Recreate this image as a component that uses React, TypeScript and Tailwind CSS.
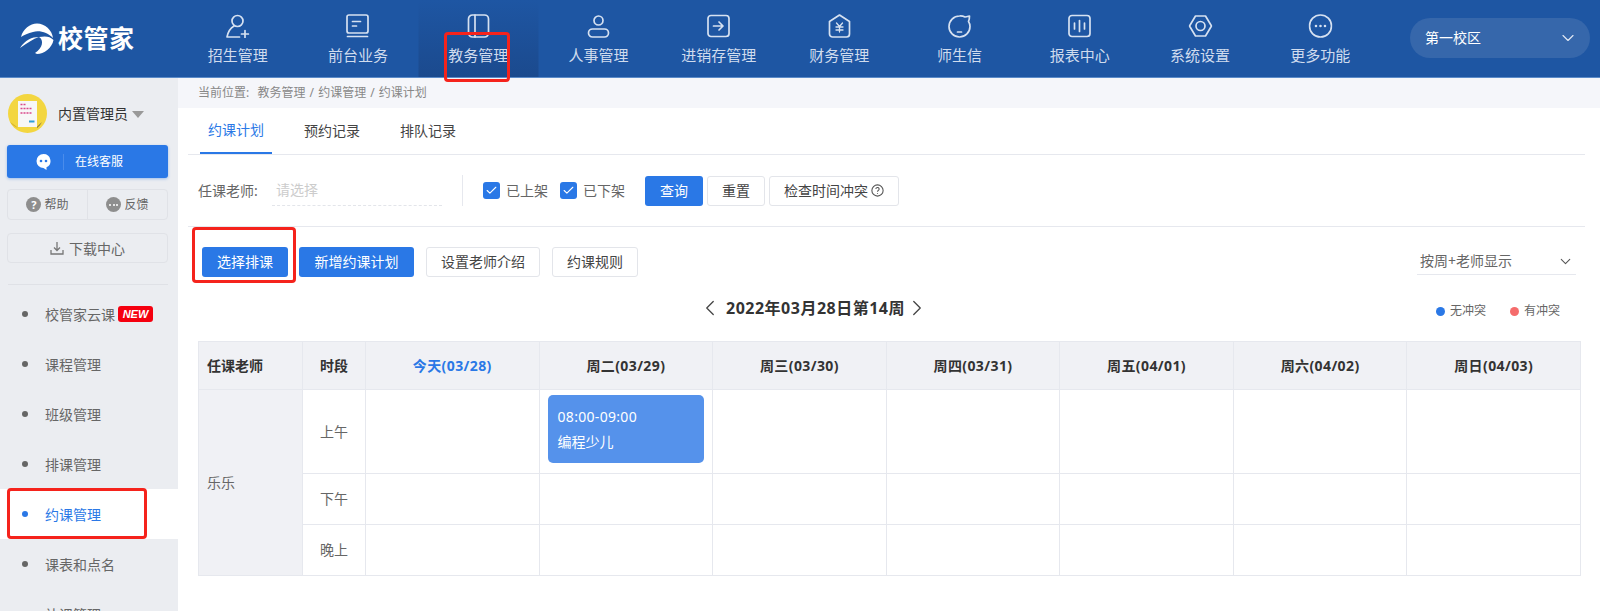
import React from 'react';
import { ChevronDown, ChevronLeft, ChevronRight, Check } from 'lucide-react';

const navItems: { label: string; d: React.ReactNode }[] = [
    { label: '招生管理', d: <><circle cx="12" cy="7" r="5.5" /><path d="M8.5 12C5 14 2.5 18 1.5 23H14" /><path d="M16 20h7M19.500 16.500v7" /></> },
    { label: '前台业务', d: <><rect x="1.500" y="1" width="21" height="18" rx="2" /><path d="M7 7.500h8M7 12h4M2 22.500h20" /></> },
    { label: '教务管理', d: <><rect x="2" y="1" width="20" height="22" rx="4" /><path d="M8.500 1v22" /></> },
    { label: '人事管理', d: <><circle cx="12" cy="6.500" r="4.500" /><rect x="2" y="15" width="20" height="8" rx="4" /></> },
    { label: '进销存管理', d: <><rect x="1.500" y="1.500" width="21" height="21" rx="3" /><path d="M7 12h9M12.500 8l4 4-4 4" /></> },
    { label: '财务管理', d: <><path d="M12 1 22 7.500V20a3 3 0 0 1-3 3H5a3 3 0 0 1-3-3V7.500Z" /><path d="M9 9l3 3.500L15 9M8.500 13h7M8.500 16h7M12 12.500V18" strokeWidth="1.300" /></> },
    { label: '师生信', d: <><path d="M12 2a10.500 10.500 0 1 0 10.500 10.500c0-2-.5-3.500-1.500-5 .8-1.500 1-3.500 1-5.500-2 .5-3 .8-4.500 1A10.500 10.500 0 0 0 12 2Z" /><path d="M10 18h4" /></> },
    { label: '报表中心', d: <><rect x="1.500" y="1.500" width="21" height="21" rx="3" /><path d="M7 9v6M12 6.500v11M17 9v6" /></> },
    { label: '系统设置', d: <><path d="M7 2h10l6 10-6 10H7L1 12Z" strokeLinejoin="round" /><circle cx="12" cy="12" r="4.500" /></> },
    { label: '更多功能', d: <><circle cx="12" cy="12" r="11" /><path d="M7.500 12h.01M12 12h.01M16.500 12h.01" strokeWidth="2.600" /></> },
];

const menuItems = ['校管家云课', '课程管理', '班级管理', '排课管理', '约课管理', '课表和点名', '补课管理'];
const days = ['今天(03/28)', '周二(03/29)', '周三(03/30)', '周四(03/31)', '周五(04/01)', '周六(04/02)', '周日(04/03)'];
const slots = ['上午', '下午', '晚上'];

const Logo = () => (
    <svg width="34" height="32" viewBox="0 0 34 32" fill="#fff">
        <path d="M1 14C3 6 10 .5 17 .5 25 .5 32 7 33 15 28 10 20 7 13 9 8 10 4 12 1 14Z" />
        <path d="M15 30C23 25 24 17 19 14 25 13 30 13 33.500 17 32 25 24 31 17 31Z" />
        <path d="M0 25C5 17 12 14 19 14 13 16 7 20 0 25Z" />
    </svg>
);

const Avatar = () => (
    <svg width="39" height="39" viewBox="0 0 39 39">
        <circle cx="19.500" cy="19.500" r="19.500" fill="#f3d640" />
        <path d="M10 34c-3-1-6-3-8-6 3 2 6 4 8 6Z" fill="#d3ae2e" />
        <path d="M29 33 34 28a19.500 19.500 0 0 1-5 6Z" fill="#5b5140" />
        <rect x="10" y="7" width="19" height="26" fill="#f7f7f7" />
        <path d="M12.500 10.500h5M12.500 14.500h11M12.500 19h11" stroke="#d9488a" strokeWidth="1.500" strokeDasharray="2 1" />
        <path d="M21 27.500h5.500" stroke="#2d9fd8" strokeWidth="2" />
    </svg>
);

const Check17 = () => (
    <span className="w-[17px] h-[17px] rounded-[3px] bg-[#2a78e6] flex items-center justify-center">
        <Check size={13} color="#fff" strokeWidth={2} />
    </span>
);

const Btn = ({ w, primary, children }: { w: string; primary?: boolean; children: React.ReactNode }) => (
    <button className={`${w} h-[30px] rounded-[3px] text-sm flex items-center justify-center ${primary ? 'bg-[#2a78e6] text-white' : 'bg-white text-[#444] border border-[#e3e5ea]'}`}>
        {children}
    </button>
);

export default function App() {
    return (
        <div className="relative w-[1600px] h-[611px] overflow-hidden bg-white flex flex-col font-['Noto_Sans','Noto_Sans_CJK_SC',sans-serif]">
            <header className="h-[78px] shrink-0 bg-[#1e56a3] border-b border-[#5b8bc9] flex items-stretch">
                <div className="w-[178px] shrink-0 flex items-center pl-[20px] gap-[4px]">
                    <Logo />
                    <span className="text-white font-bold text-[25px] leading-none tracking-[0.5px]">校管家</span>
                </div>
                {navItems.map((item, i) => (
                    <div
                        key={item.label}
                        className={`w-[120.300px] -translate-x-[0.5px] flex flex-col items-center pt-[14px] ${i === 2 ? 'bg-gradient-to-b from-[#1e56a3] to-[#1b4a8e]' : ''}`}
                    >
                        <svg width="24" height="24" viewBox="0 0 24 24" fill="none" stroke="#d6e1f1" strokeWidth="1.700" strokeLinecap="round" strokeLinejoin="round">
                            {item.d}
                        </svg>
                        <span className="mt-[6px] text-[15px] leading-[22px] text-[#d0dcee] whitespace-nowrap">{item.label}</span>
                    </div>
                ))}
                <div className="ml-[29px] mt-[18px] w-[180px] h-[40px] rounded-full bg-[#3667ab] flex items-center justify-between pl-[15px] pr-[12px]">
                    <span className="text-sm text-white">第一校区</span>
                    <ChevronDown size={20} color="#dfe7f3" strokeWidth={1.400} />
                </div>
            </header>

            <div className="flex flex-1 min-h-0">
                <aside className="w-[178px] shrink-0 bg-[#ebedf1] overflow-hidden">
                    <div className="mt-[16px] ml-[8px] flex items-center h-[39px]">
                        <Avatar />
                        <span className="ml-[11px] text-[14px] text-[#333]">内置管理员</span>
                        <span className="ml-[4px] mt-[2px] w-0 h-0 border-x-[6px] border-x-transparent border-t-[7px] border-t-[#999]" />
                    </div>
                    <div className="mt-[12px] ml-[7px] w-[161px] h-[33px] rounded-[3px] bg-[#2a78e6] shadow-[0_1px_3px_rgba(42,120,230,0.4)] flex items-center text-white">
                        <svg className="ml-[29px]" width="15" height="16" viewBox="0 0 15 16" fill="#fff">
                            <path d="M7.500 0a7 7 0 0 1 3 13.300V16l-3-2A7 7 0 0 1 7.500 0Z" />
                            <circle cx="5" cy="7" r="1.300" fill="#2a78e6" />
                            <circle cx="10" cy="7" r="1.300" fill="#2a78e6" />
                        </svg>
                        <span className="ml-[12px] w-px h-[16px] bg-[#4a8ceb]" />
                        <span className="ml-[11px] text-[12px]">在线客服</span>
                    </div>
                    <div className="mt-[11px] ml-[7px] w-[161px] h-[31px] rounded-[4px] border border-[#e0e2e7] flex text-[12px] text-[#666]">
                        <div className="flex-1 flex items-center justify-center gap-[3px] border-r border-[#e0e2e7]">
                            <span className="w-[15px] h-[15px] rounded-full bg-[#8e8e8e] text-white text-[11px] font-bold leading-none flex items-center justify-center">?</span>
                            帮助
                        </div>
                        <div className="flex-1 flex items-center justify-center gap-[3px]">
                            <span className="w-[15px] h-[15px] rounded-full bg-[#8e8e8e] flex items-center justify-center gap-[1.500px]">
                                <span className="w-[2px] h-[2px] rounded-full bg-white" />
                                <span className="w-[2px] h-[2px] rounded-full bg-white" />
                                <span className="w-[2px] h-[2px] rounded-full bg-white" />
                            </span>
                            反馈
                        </div>
                    </div>
                    <div className="mt-[13px] ml-[7px] w-[161px] h-[30px] rounded-[4px] border border-[#e0e2e7] flex items-center justify-center gap-[5px] text-[14px] text-[#666]">
                        <svg width="14" height="14" viewBox="0 0 14 14" fill="none" stroke="#777" strokeWidth="1.300">
                            <path d="M7 1v8M4 6.500 7 9.500l3-3M1 9v4h12V9" />
                        </svg>
                        下载中心
                    </div>
                    <div className="mt-[21px] ml-[8px] w-[160px] h-px bg-[#dfe1e6]" />
                    <ul className="mt-[4px]">
                        {menuItems.map((m, i) => (
                            <li key={m} className={`h-[50px] flex items-center pl-[22px] text-[14px] ${i === 4 ? 'bg-white text-[#2a78e6]' : 'text-[#666]'}`}>
                                <span className={`w-[6px] h-[6px] rounded-full ${i === 4 ? 'bg-[#2a78e6]' : 'bg-[#666]'}`} />
                                <span className="ml-[17px]">{m}</span>
                                {i === 0 && (
                                    <span className="ml-[3px] w-[35px] h-[16px] rounded-[3px] bg-[#f5000f] text-white text-[11px] font-bold italic leading-none flex items-center justify-center font-['Liberation_Sans',sans-serif]">NEW</span>
                                )}
                            </li>
                        ))}
                    </ul>
                </aside>

                <main className="flex-1 min-w-0 flex flex-col">
                    <div className="h-[30px] shrink-0 bg-[#f5f6fa] pl-[20px] flex items-center text-[12px] text-[#888] [word-spacing:1px]">
                        当前位置:&nbsp; 教务管理 / 约课管理 / 约课计划
                    </div>
                    <div className="pl-[10px] pr-[15px]">
                        <div className="h-[47px] border-b border-[#e6e8ee] flex gap-6 pl-[12px] text-sm">
                            <div className="w-[72px] h-[46px] flex items-center justify-center text-[#2a78e6] border-b-2 border-[#2a78e6]">约课计划</div>
                            <div className="w-[72px] h-[46px] flex items-center justify-center text-[#444]">预约记录</div>
                            <div className="w-[72px] h-[46px] flex items-center justify-center text-[#444]">排队记录</div>
                        </div>

                        <div className="h-[72px] border-b border-[#e6e8ee] flex items-center pl-[10px] text-sm text-[#666]">
                            <span className="w-[74px]">任课老师:</span>
                            <span className="w-[170px] h-[30px] pl-[4px] flex items-center border-b border-dashed border-[#e3e5ea] text-[#ccc]">请选择</span>
                            <span className="ml-[20px] w-px h-[31px] bg-[#e6e8ee]" />
                            <span className="ml-[20px]"><Check17 /></span>
                            <span className="ml-[6px]">已上架</span>
                            <span className="ml-[12px]"><Check17 /></span>
                            <span className="ml-[6px]">已下架</span>
                            <span className="ml-[20px]"><Btn w="w-[58px]" primary>查询</Btn></span>
                            <span className="ml-[4px]"><Btn w="w-[58px]">重置</Btn></span>
                            <span className="ml-[4px]">
                                <Btn w="w-[130px]">
                                    检查时间冲突
                                    <svg className="ml-[3px]" width="13" height="13" viewBox="0 0 12 12" fill="none" stroke="#555" strokeWidth="1">
                                        <circle cx="6" cy="6" r="5.200" />
                                        <path d="M4.500 4.700a1.500 1.500 0 1 1 2.200 1.300C6.200 6.300 6 6.600 6 7.200M6 8.500v.8" />
                                    </svg>
                                </Btn>
                            </span>
                        </div>

                        <div className="pt-[20px] pl-[14px] flex items-center">
                            <Btn w="w-[86px]" primary>选择排课</Btn>
                            <span className="ml-[11px]"><Btn w="w-[115px]" primary>新增约课计划</Btn></span>
                            <span className="ml-[12px]"><Btn w="w-[114px]">设置老师介绍</Btn></span>
                            <span className="ml-[12px]"><Btn w="w-[86px]">约课规则</Btn></span>
                            <div className="ml-auto mr-[9px] w-[159px] h-[26px] -mt-[1px] border-b border-[#e6e8ee] pl-[3px] pr-[2px] flex items-center justify-between text-sm text-[#666]">
                                按周+老师显示
                                <ChevronDown size={17} color="#555" strokeWidth={1.500} />
                            </div>
                        </div>

                        <div className="h-[64px] pb-[3px] flex items-center">
                            <ChevronLeft className="ml-[509px]" size={26} color="#444" strokeWidth={1.200} />
                            <span className="ml-[3px] text-base font-bold text-[#333] tracking-[0.5px]">2022年03月28日第14周</span>
                            <ChevronRight className="-ml-[1.5px]" size={26} color="#444" strokeWidth={1.200} />
                            <div className="ml-auto mr-[25px] mt-[7px] flex items-center text-[12px] text-[#666]">
                                <span className="w-[9px] h-[9px] rounded-full bg-[#2a78e6]" />
                                <span className="ml-[5px]">无冲突</span>
                                <span className="ml-[24px] w-[9px] h-[9px] rounded-full bg-[#f56c6c]" />
                                <span className="ml-[5px]">有冲突</span>
                            </div>
                        </div>

                        <table className="ml-[10px] w-[1383px] table-fixed border-collapse border border-[#e6e8ee] text-sm">
                            <colgroup>
                                <col className="w-[104px]" />
                                <col className="w-[63px]" />
                            </colgroup>
                            <thead>
                                <tr className="h-[48px] bg-[#f0f1f5] text-[#333] font-bold">
                                    <th className="border border-[#e6e8ee] pl-[8px] text-left">任课老师</th>
                                    <th className="border border-[#e6e8ee]">时段</th>
                                    {days.map((d, i) => (
                                        <th key={d} className={`border border-[#e6e8ee] tracking-[0.4px] ${i === 0 ? 'text-[#2a78e6]' : ''}`}>{d}</th>
                                    ))}
                                </tr>
                            </thead>
                            <tbody className="text-[#666]">
                                {slots.map((s, r) => (
                                    <tr key={s} className={r === 0 ? 'h-[84px]' : 'h-[51px]'}>
                                        {r === 0 && <td rowSpan={3} className="bg-[#f0f1f5] border border-[#e6e8ee] pl-[8px]">乐乐</td>}
                                        <td className="border border-[#e6e8ee] text-center">{s}</td>
                                        {days.map((d, i) => (
                                            <td key={d} className="border border-[#e6e8ee] px-[8px] pt-[5px] align-top">
                                                {r === 0 && i === 1 && (
                                                    <div className="h-[68px] rounded-[5px] bg-[#5592eb] text-white pl-[10px] flex flex-col justify-center leading-[25px]">
                                                        <span className="tracking-[0.3px]">08:00-09:00</span>
                                                        <span>编程少儿</span>
                                                    </div>
                                                )}
                                            </td>
                                        ))}
                                    </tr>
                                ))}
                            </tbody>
                        </table>
                    </div>
                </main>
            </div>

            {/* red annotation boxes */}
            <div className="absolute left-[444px] top-[32px] w-[66px] h-[50px] rounded-[4px] border-[3px] border-[#f5231c]" />
            <div className="absolute left-[7px] top-[488px] w-[140px] h-[51px] rounded-[4px] border-[3px] border-[#f5231c]" />
            <div className="absolute left-[192px] top-[227px] w-[104px] h-[56px] rounded-[4px] border-[3px] border-[#f5231c]" />
        </div>
    );
}
